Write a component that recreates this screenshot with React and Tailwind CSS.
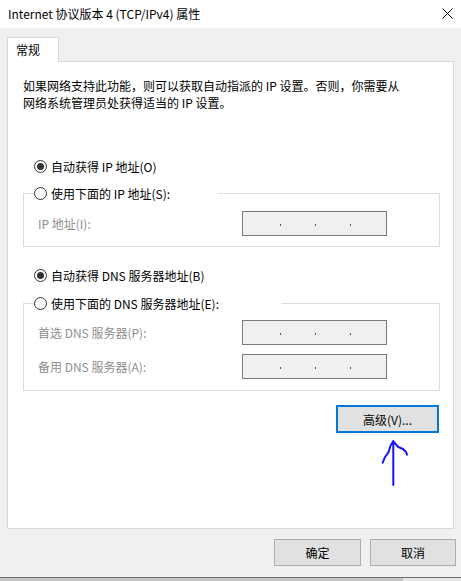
const Radio = ({ checked }) => (
  <span className="flex h-[13px] w-[13px] shrink-0 items-center justify-center rounded-full border border-[#333333] bg-white">
    {checked && <span className="h-[7px] w-[7px] rounded-full bg-[#333333]" />}
  </span>
);

const IpBox = () => (
  <div className="flex h-[25px] w-[145px] items-end gap-[34px] border border-[#7a7a7a] bg-[#f0f0f0] pb-[9px] pl-[37px]">
    <span className="h-[2px] w-[1px] bg-[#555]" />
    <span className="h-[2px] w-[1px] bg-[#555]" />
    <span className="h-[2px] w-[1px] bg-[#555]" />
  </div>
);

const Field = ({ label }) => (
  <div className="flex items-center">
    <span className="w-[218px] pl-[14px] text-[#8e8e8e]">{label}</span>
    <IpBox />
  </div>
);

const Button = ({ children, focused, className = "" }) => (
  <button
    type="button"
    className={
      "flex items-center justify-center bg-[#e1e1e1] text-black " +
      (focused ? "border-2 border-[#0078d7] " : "border border-[#adadad] ") +
      className
    }
  >
    {children}
  </button>
);

export default function App() {
  return (
    <div className="flex h-[581px] w-[461px] flex-col overflow-hidden font-['Noto_Sans_CJK_SC',sans-serif] text-[12px] leading-[17px] text-black">
      {/* title bar */}
      <div className="flex h-[28px] shrink-0 items-center justify-between bg-white pl-[8px] pr-[8px]">
        <span className="pb-[2px]">Internet 协议版本 4 (TCP/IPv4) 属性</span>
        <svg width="11" height="11" viewBox="0 0 11 11" className="mb-[2px]">
          <path d="M0.5 0.5 L10.5 10.5 M10.5 0.5 L0.5 10.5" stroke="#000" strokeWidth="1" />
        </svg>
      </div>

      <div className="flex flex-1 flex-col bg-[#f0f0f0] px-[7px] pt-[9px]">
        <div className="relative z-10 -mb-[1px] flex h-[25px] w-[52px] items-start border-x border-t border-[#d9d9d9] bg-white pl-[8px] pt-[3px]">
          常规
        </div>

        <div className="flex h-[468px] flex-col border border-[#d9d9d9] bg-white px-[15px] pt-[15px]">
          <p>
            如果网络支持此功能，则可以获取自动指派的 IP 设置。否则，你需要从
            <br />
            网络系统管理员处获得适当的 IP 设置。
          </p>

          <label className="ml-[11px] mt-[45px] flex h-[20px] items-center gap-[4px]">
            <Radio checked />
            <span>自动获得 IP 地址(O)</span>
          </label>

          <fieldset className="mt-[7px] w-[417px] border border-[#dcdcdc] pb-[10px]">
            <legend className="ml-[10px] flex h-[20px] w-[184px] items-center gap-[4px]">
              <Radio />
              <span>使用下面的 IP 地址(S):</span>
            </legend>
            <div className="pt-[8px]">
              <Field label="IP 地址(I):" />
            </div>
          </fieldset>

          <label className="ml-[11px] mt-[18px] flex h-[20px] items-center gap-[4px]">
            <Radio checked />
            <span>自动获得 DNS 服务器地址(B)</span>
          </label>

          <fieldset className="mt-[8px] w-[417px] border border-[#dcdcdc] pb-[11px]">
            <legend className="ml-[10px] flex h-[20px] w-[247px] items-center gap-[4px]">
              <Radio />
              <span>使用下面的 DNS 服务器地址(E):</span>
            </legend>
            <div className="flex flex-col gap-[9px] pt-[7px]">
              <Field label="首选 DNS 服务器(P):" />
              <Field label="备用 DNS 服务器(A):" />
            </div>
          </fieldset>

          <div className="mt-[14px] flex w-[416px] justify-end">
            <Button focused className="h-[28px] w-[103px]">
              高级(V)...
            </Button>
          </div>

          <div className="mt-[5px] flex w-[416px] justify-end pr-[29px]">
            <svg width="30" height="50" viewBox="0 0 30 50">
              <path
                d="M13.3 3 L13.3 47 M2.7 24.7 L5 19 L8.3 14.7 L10.7 7.3 L13.3 3.3 L18.3 9 L23 11 L26 14 L27 16.7"
                fill="none"
                stroke="#1414ff"
                strokeWidth="2"
                strokeLinecap="round"
                strokeLinejoin="round"
              />
            </svg>
          </div>
        </div>

        <div className="-mr-[2px] mt-[10px] flex justify-end gap-[9px]">
          <Button className="h-[27px] w-[87px]">确定</Button>
          <Button className="h-[27px] w-[86px]">取消</Button>
        </div>
      </div>

      <div className="h-[11px] shrink-0 bg-[#f0f0f0]" />
      <div className="h-[1px] shrink-0 bg-[#6e6e6e]" />
      <div className="flex h-[3px] shrink-0">
        <div className="w-[403px] bg-[#c4c4c4]" />
        <div className="flex-1 bg-[#e6e6e6]" />
      </div>
    </div>
  );
}
